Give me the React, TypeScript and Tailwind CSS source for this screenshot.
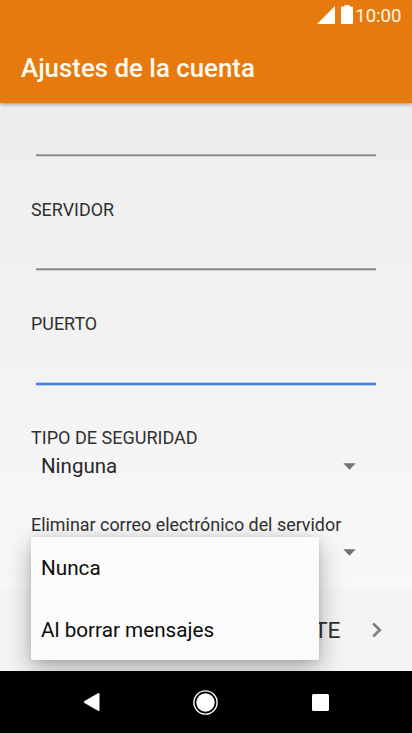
import React from "react";

function Field({ label, active = false }: { label?: string; active?: boolean }) {
  return (
    <div className="flex h-[114px] flex-col">
      <div className="h-5 text-[17.9px] leading-5 text-[#303030]">{label}</div>
      <div
        className={
          active
            ? "mt-[48px] ml-[5px] h-[4px] w-[340px] flex-none border-y border-[#b5d0f5] bg-[#4a80da]"
            : "mt-[48px] ml-[5px] h-[3px] w-[340px] flex-none border-y border-t-[#a6a6a6] border-b-[#d2d2d2] bg-[#868686]"
        }
      />
    </div>
  );
}

function Caret() {
  return (
    <svg className="h-[7px] w-[13px]" viewBox="0 0 13 7">
      <path d="M0.3 0.2H12.7L6.5 6.7Z" fill="#737373" />
    </svg>
  );
}

export default function App() {
  return (
    <div className="relative flex h-[733px] w-[412px] flex-col overflow-hidden bg-[#eeeeee] font-['Roboto',sans-serif]">
      <header className="z-10 flex h-[103px] flex-none flex-col bg-[#e77a0e] text-white shadow-[0_1px_4px_rgba(0,0,0,0.42)]">
        <div className="flex h-8 items-center justify-end pr-[10.5px]">
          <svg className="mr-[6px] mb-[2px] h-[18px] w-[18px]" viewBox="0 0 18 18">
            <path d="M0 18L18 0V18Z" fill="#fff" />
          </svg>
          <svg className="mr-[2.5px] mb-[3px] h-[19px] w-[12px]" viewBox="0 0 12 19">
            <path d="M0 2.5Q0 1.5 1 1.5H3.5V0H8.5V1.5H11Q12 1.5 12 2.5V18Q12 19 11 19H1Q0 19 0 18Z" fill="#fff" />
          </svg>
          <span className="text-[18.6px] leading-8 text-[#fff8e8]">10:00</span>
        </div>
        <h1 className="pl-[21px] text-[25.85px] leading-[72px] font-medium text-[#fffaf0]">Ajustes de la cuenta</h1>
      </header>

      <main className="flex h-[485px] flex-none flex-col bg-linear-to-b from-[#ededed] to-[#f8f8f8] pl-[31px]">
        <div className="-mt-[17px] flex flex-none flex-col">
          <Field />
          <Field label="SERVIDOR" />
          <Field label="PUERTO" active />
        </div>
        <div className="h-5 text-[18.05px] leading-5 text-[#303030]">TIPO DE SEGURIDAD</div>
        <div className="flex h-[36px] items-center justify-between pr-[56px] pl-[10px]">
          <span className="pt-px text-[20.5px] text-[#282828]">Ninguna</span>
          <Caret />
        </div>
        <div className="mt-[31px] h-5 text-[17.9px] leading-5 whitespace-nowrap text-[#303030]">
          Eliminar correo electrónico del servidor
        </div>
        <div className="flex h-[35px] items-center justify-end pr-[56px]">
          <Caret />
        </div>
      </main>

      <footer className="flex h-[83px] flex-none items-center justify-end bg-[#f4f4f4] pr-[30.5px] text-[#303030]">
        <span className="pt-[3px] text-[22.8px]">SIGUIENTE</span>
        <svg className="ml-[31px] h-[16px] w-[10px]" viewBox="0 0 10 16">
          <path d="M1.2 1.5L7.8 8L1.2 14.5" fill="none" stroke="#808080" strokeWidth="2.6" />
        </svg>
      </footer>

      <ul className="absolute top-[537px] left-[31px] h-[123px] w-[288px] rounded-[2px] bg-[#fbfbfb] pl-[10px] text-[20.7px] text-[#0c0c0c] shadow-[0_9px_26px_rgba(0,0,0,0.3),0_1px_7px_rgba(0,0,0,0.1)]">
        <li className="h-[62px] leading-[63px]">Nunca</li>
        <li className="h-[61px] leading-[62px]">Al borrar mensajes</li>
      </ul>

      <nav className="z-10 flex h-[62px] flex-none items-center bg-black">
        <svg className="ml-[83px] h-[20px] w-[17px]" viewBox="0 0 17 20">
          <path d="M1.5 9.1L15 1.2Q16.5 0.5 16.5 2V18Q16.5 19.5 15 18.8L1.5 10.9Q0 10 1.5 9.1Z" fill="#fff" />
        </svg>
        <svg className="ml-[93px] h-[25px] w-[25px]" viewBox="0 0 25 25">
          <circle cx="12.5" cy="12.5" r="11.6" fill="none" stroke="#fff" strokeWidth="1.4" />
          <circle cx="12.5" cy="12.5" r="9.2" fill="#fff" />
        </svg>
        <div className="ml-[94px] h-[17px] w-[17px] rounded-[1.5px] bg-white" />
      </nav>
    </div>
  );
}
